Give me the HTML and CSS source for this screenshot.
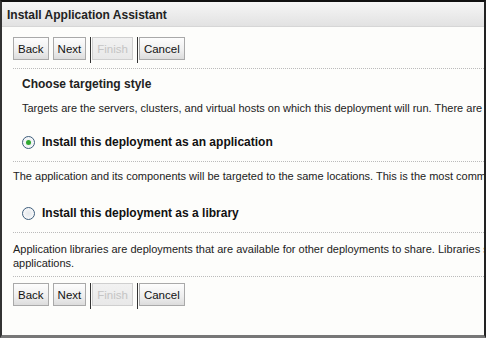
FILE: index.html
```
<!DOCTYPE HTML>
<html>

<head>
  <meta charset="UTF-8">
  <title>Install Application Assistant</title>
  <link rel="stylesheet" href="styles.css">
</head>

<body>
  <div id="frame">
    <div class="title">Install Application Assistant</div>

    <div class="bar">
      <button class="btn">Back</button>
      <button class="btn">Next</button>
      <span class="sep"></span>
      <button class="btn" disabled>Finish</button>
      <span class="sep"></span>
      <button class="btn">Cancel</button>
    </div>

    <div class="section first">
      <h3>Choose targeting style</h3>
      <p class="lead">Targets are the servers, clusters, and virtual hosts on which this deployment will run. There are several ways you can target an application.</p>
      <label class="opt"><span class="radio on"></span>Install this deployment as an application</label>
    </div>

    <div class="section second">
      <p>The application and its components will be targeted to the same locations. This is the most common usage.</p>
      <label class="opt"><span class="radio"></span>Install this deployment as a library</label>
    </div>

    <div class="section last">
      <p>Application libraries are deployments that are available for other deployments to share. Libraries should be available on all of the targets running their referencing</p>
      <p>applications.</p>
    </div>

    <div class="bar bottom">
      <button class="btn">Back</button>
      <button class="btn">Next</button>
      <span class="sep"></span>
      <button class="btn" disabled>Finish</button>
      <span class="sep"></span>
      <button class="btn">Cancel</button>
    </div>
  </div>
</body>

</html>
```

FILE: styles.css
```
body {
  margin: 0;
  font-family: "Liberation Sans", Arial, sans-serif;
  overflow: hidden;
}

p,
h3 {
  margin: 0;
}

#frame {
  box-sizing: border-box;
  width: 486px;
  height: 338px;
  border-top: 2px solid #111;
  border-left: 2px solid #333;
  border-right: 2px solid #222;
  border-bottom: 3px solid #777;
  background: #fdfdfb;
  overflow: hidden;
  white-space: nowrap;
}

.title {
  height: 24px;
  line-height: 26px;
  padding-left: 5px;
  background: linear-gradient(to bottom, #f6f6f6 0, #ececec 50%, #e2e2e2 100%);
  border-bottom: 1px solid #d6d6d6;
  font-size: 12px;
  font-weight: bold;
  color: #222;
}

.bar {
  display: flex;
  align-items: flex-start;
  gap: 4px;
  margin: 10px 0 0 11px;
  height: 31px;
  border-bottom: 1px dotted #bbb;
}

.bar.bottom {
  margin-top: 6px;
  border-bottom: none;
}

.btn {
  height: 23px;
  padding: 0 4px;
  border: 1px solid #a9a9a9;
  border-radius: 0;
  background: linear-gradient(to bottom, #fdfdfd 0, #eeeeee 60%, #dcdcdc 100%);
  font-family: "Liberation Sans", Arial, sans-serif;
  font-size: 11.5px;
  color: #111;
}

.btn:disabled {
  color: #c4c4c4;
  background: linear-gradient(to bottom, #f2f2f2 0, #e8e8e8 100%);
  border-color: #cfcfcf;
}

.sep {
  width: 1px;
  height: 26px;
  margin-right: -3px;
  background: #333;
}

.section {
  margin-left: 11px;
  border-bottom: 1px dotted #bbb;
  font-size: 11px;
  color: #222;
}

.section p {
  line-height: 14px;
}

.section h3 {
  padding: 8px 0 0 9px;
  font-size: 12px;
  line-height: 14px;
  font-weight: bold;
}

.section .lead {
  padding: 10px 0 0 9px;
}

.opt {
  display: flex;
  align-items: center;
  gap: 7px;
  padding: 20px 0 12px 9px;
  font-size: 12px;
  font-weight: bold;
  color: #111;
}

.radio {
  box-sizing: border-box;
  width: 13px;
  height: 13px;
  border: 1px solid #3c5c7a;
  border-radius: 50%;
  background: radial-gradient(circle, #e4e8ec 0, #ffffff 100%);
  position: relative;
}

.radio.on::after {
  content: "";
  position: absolute;
  left: 3px;
  top: 3px;
  width: 5px;
  height: 5px;
  border-radius: 50%;
  background: #2fa82f;
}

.second > p:first-child {
  padding-top: 7px;
}

.second .opt {
  padding-top: 23px;
}

.last {
  padding: 9px 0 6px;
}
```
